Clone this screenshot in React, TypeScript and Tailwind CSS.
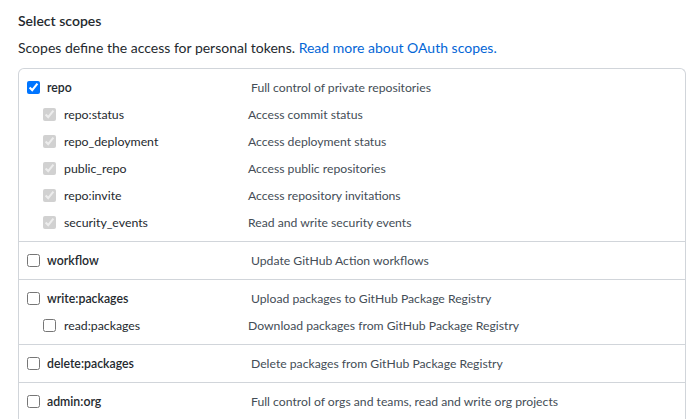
type Scope = {
  name: string;
  description: string;
  checked?: boolean;
  children?: { name: string; description: string; checked?: boolean; disabled?: boolean }[];
};

const scopes: Scope[] = [
  {
    name: "repo",
    description: "Full control of private repositories",
    checked: true,
    children: [
      { name: "repo:status", description: "Access commit status", checked: true, disabled: true },
      { name: "repo_deployment", description: "Access deployment status", checked: true, disabled: true },
      { name: "public_repo", description: "Access public repositories", checked: true, disabled: true },
      { name: "repo:invite", description: "Access repository invitations", checked: true, disabled: true },
      { name: "security_events", description: "Read and write security events", checked: true, disabled: true },
    ],
  },
  { name: "workflow", description: "Update GitHub Action workflows" },
  {
    name: "write:packages",
    description: "Upload packages to GitHub Package Registry",
    children: [{ name: "read:packages", description: "Download packages from GitHub Package Registry" }],
  },
  { name: "delete:packages", description: "Delete packages from GitHub Package Registry" },
  { name: "admin:org", description: "Full control of orgs and teams, read and write org projects" },
];

export default function App() {
  return (
    <div className="min-h-screen bg-white pl-[18px] pr-[14px] pt-[11px] font-['Segoe_UI','Lato',sans-serif] text-[#24292e]">
      <h3 className="h-[20px] text-[14px] font-semibold leading-[20px]">Select scopes</h3>
      <p className="mt-[7px] h-[20px] text-[14px] leading-[20px]">
        Scopes define the access for personal tokens.{" "}
        <a href="#" className="text-[#0366d6]">
          Read more about OAuth scopes.
        </a>
      </p>
      <div className="mt-[10px] w-[668px] rounded-t-md border border-b-0 border-[#d1d5da]">
        {scopes.map((s, i) => (
          <div key={s.name} className={"py-[5px] pl-[8px] " + (i > 0 ? "border-t border-[#d1d5da]" : "")}>
            <label className="flex h-[27px] items-center">
              <input type="checkbox" defaultChecked={s.checked} className="m-0 h-[13px] w-[13px] shrink-0" />
              <span className="ml-[7px] w-[204px] pt-[2px] text-[12.3px] font-semibold">{s.name}</span>
              <span className="pt-[2px] text-[12.2px] text-[#444d56]">{s.description}</span>
            </label>
            {s.children?.map((c) => (
              <label key={c.name} className="ml-[16px] flex h-[27px] items-center">
                <input
                  type="checkbox"
                  defaultChecked={c.checked}
                  disabled={c.disabled}
                  className="m-0 h-[13px] w-[13px] shrink-0"
                />
                <span className="ml-[8px] w-[184px] pt-[2px] text-[12.3px]">{c.name}</span>
                <span className="pt-[2px] text-[12.2px] text-[#444d56]">{c.description}</span>
              </label>
            ))}
          </div>
        ))}
      </div>
    </div>
  );
}
